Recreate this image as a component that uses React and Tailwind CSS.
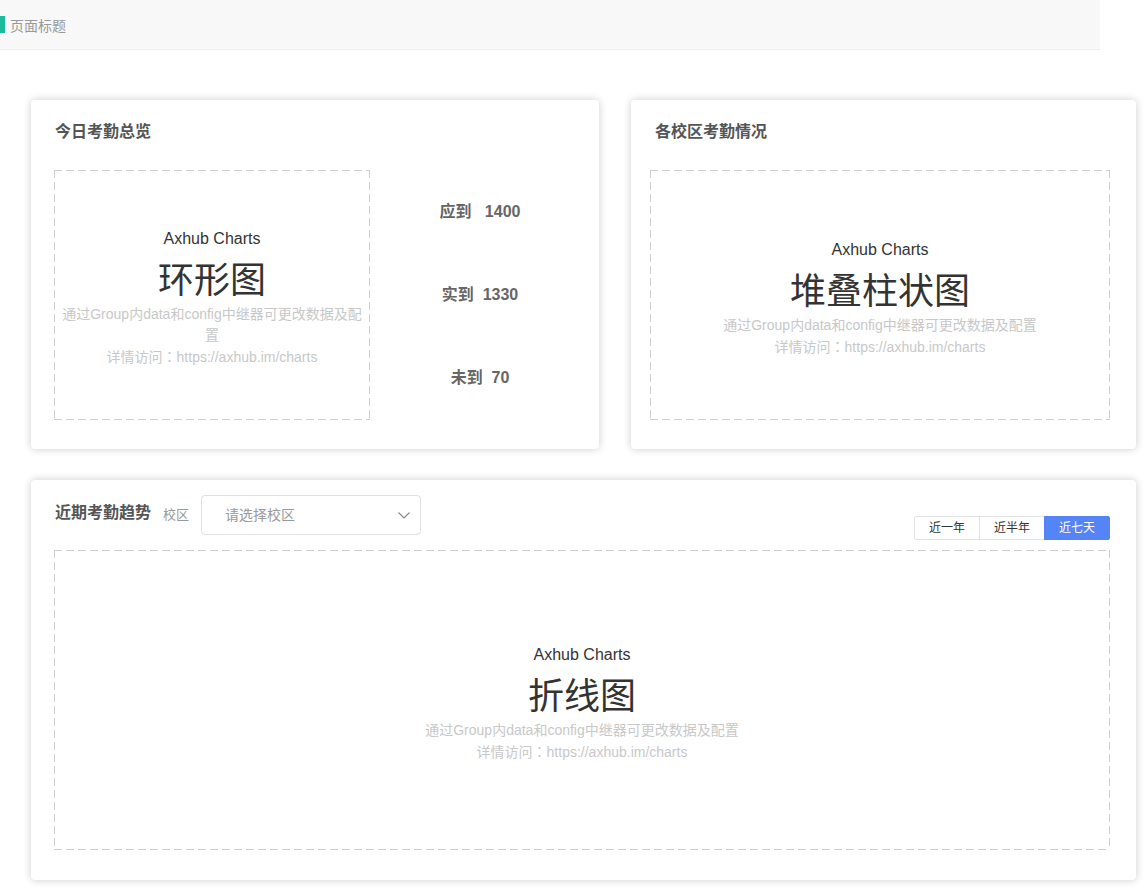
import React from 'react';

const FONT = 'font-["Liberation_Sans","Noto_Sans_CJK_SC",sans-serif]';

// long-dash frame, the default 1px dashed border is too fine
const DASHED = 'bg-[linear-gradient(to_right,#cfcfcf_8px,transparent_8px),linear-gradient(to_right,#cfcfcf_8px,transparent_8px),linear-gradient(to_bottom,#cfcfcf_8px,transparent_8px),linear-gradient(to_bottom,#cfcfcf_8px,transparent_8px)] bg-[length:12px_1px,12px_1px,1px_12px,1px_12px] bg-[position:0_0,0_100%,0_0,100%_0] [background-repeat:repeat-x,repeat-x,repeat-y,repeat-y]';

const ChartPlaceholder = ( { title, className } ) => (
	<div className={ `flex flex-col items-center justify-center px-[6px] pt-[7px] text-center ${ DASHED } ${ className }` }>
		<div className="text-[16px] leading-[20px] text-[#333333]">Axhub Charts</div>
		<div className="mt-[9px] text-[36px] leading-[46px] text-[#333333]">{ title }</div>
		<div className="text-[14px] leading-[21px] text-[#c8c8c8]">
			通过Group内data和config中继器可更改数据及配置
		</div>
		<div className="text-[14px] leading-[21px] text-[#c8c8c8]">
			详情访问<span className='font-["Noto_Sans_CJK_JP",sans-serif]'>：</span>https://axhub.im/charts
		</div>
	</div>
);

const Card = ( { className, children } ) => (
	<div className={ `rounded-[4px] bg-white shadow-[0_0_9px_rgba(0,0,0,0.2)] ${ className }` }>
		{ children }
	</div>
);

const Stat = ( { label, value } ) => (
	<div className="flex flex-1 items-center justify-center whitespace-pre text-[16px] font-bold text-[#666666]">
		{ label }{ value }
	</div>
);

const RangeTabs = () => {
	const tabs = [ '近一年', '近半年', '近七天' ];
	const active = '近七天';

	return (
		<div className="mt-[21px] flex h-[24px]">
			{ tabs.map( ( tab, i ) => (
				<div
					key={ tab }
					className={ [
						'flex w-[66px] items-center justify-center border text-[12px]',
						tab === active ? 'border-[#5584f7] bg-[#5584f7] text-white' : 'border-[#e3e3e3] bg-white text-[#333333]',
						0 === i ? 'rounded-l-[2px]' : '-ml-px',
						i === tabs.length - 1 ? 'rounded-r-[2px]' : ''
					].join( ' ' ) }
				>
					{ tab }
				</div>
			) ) }
		</div>
	);
};

export default function App() {
	return (
		<div className={ `min-h-[893px] w-[1147px] bg-white ${ FONT }` }>
			{/* page header */}
			<div className="flex h-[50px] w-[1100px] items-center border-b border-[#efefef] bg-[#f8f8f8]">
				<div className="h-[17px] w-[5px] bg-[#1abc9c]" />
				<div className="ml-[5px] mt-[4px] text-[14px] text-[#999999]">页面标题</div>
			</div>

			<div className="ml-[31px] mt-[50px] flex w-[1105px] flex-col gap-[31px]">
				<div className="flex gap-[32px]">
					<Card className="h-[349px] w-[568px] pl-[23px] pt-[22px]">
						<div className="pl-px text-[16px] font-bold leading-[20px] text-[#555555]">今日考勤总览</div>
						<div className="mt-[28px] flex">
							<ChartPlaceholder title="环形图" className="h-[250px] w-[316px]" />
							<div className="ml-[10px] flex h-[250px] w-[200px] flex-col">
								<Stat label="应到" value="   1400" />
								<Stat label="实到" value="  1330" />
								<Stat label="未到" value="  70" />
							</div>
						</div>
					</Card>

					<Card className="h-[349px] w-[505px] pl-[19px] pt-[22px]">
						<div className="pl-[5px] text-[16px] font-bold leading-[20px] text-[#555555]">各校区考勤情况</div>
						<ChartPlaceholder title="堆叠柱状图" className="mt-[28px] h-[250px] w-[460px]" />
					</Card>
				</div>

				<Card className="h-[400px] w-[1105px] pl-[23px] pt-[15px]">
					<div className="flex w-[1056px] justify-between">
						<div className="flex h-[40px] items-center">
							<div className="mb-[4px] pl-px text-[16px] font-bold text-[#555555]">近期考勤趋势</div>
							<div className="ml-[12px] text-[13px] text-[#999999]">校区</div>
							<div className="ml-[12px] flex h-[40px] w-[220px] items-center justify-between rounded-[4px] border border-[#e0e0e0] pl-[23px] pr-[9px]">
								<span className="text-[14px] text-[#999999]">请选择校区</span>
								<svg width="14" height="14" viewBox="0 0 14 14" fill="none">
									<path d="M1.5 4.5 L7 10 L12.5 4.5" stroke="#888888" strokeWidth="1.1" />
								</svg>
							</div>
						</div>
						<RangeTabs />
					</div>
					<ChartPlaceholder title="折线图" className="mt-[10px] h-[300px] w-[1056px]" />
				</Card>
			</div>
		</div>
	);
}
